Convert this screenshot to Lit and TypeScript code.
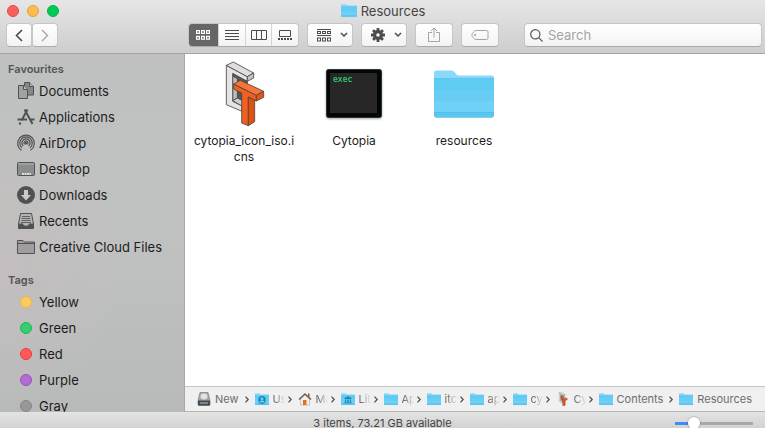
import { LitElement, html, svg, css, nothing, TemplateResult } from "lit";
import { customElement, state } from "lit/decorators.js";
import { classMap } from "lit/directives/class-map.js";

const back = html`<svg width="8" height="13" viewBox="0 0 8 13"><path d="M7 1 1.500 6.500 7 12" fill="none" stroke="currentColor" stroke-width="1.600"/></svg>`;
const forward = html`<svg width="8" height="13" viewBox="0 0 8 13"><path d="M1 1l5.500 5.500L1 12" fill="none" stroke="currentColor" stroke-width="1.400"/></svg>`;
const caret = html`<svg width="8" height="6" viewBox="0 0 8 6"><path d="M1 1l3 3 3-3" fill="none" stroke="currentColor" stroke-width="1.500"/></svg>`;

const cells = (y: number) =>
  [0.6, 5.6, 10.6].map((x) => svg`<rect x=${x} y=${y} width="2.800" height="2.800"/>`);

const viewIcons: Record<string, TemplateResult> = {
  Icons: html`<svg width="14" height="10" viewBox="0 0 14 10" fill="none" stroke="currentColor" stroke-width="1.200">${cells(0.6)}${cells(6.4)}</svg>`,
  List: html`<svg width="14" height="11" viewBox="0 0 14 11" stroke="currentColor"><path d="M0 .5h14M0 3.500h14M0 6.500h14M0 9.500h14"/></svg>`,
  Columns: html`<svg width="16" height="11" viewBox="0 0 16 11" fill="none" stroke="currentColor"><path d="M.5.5h15v9H.5zM5.500.5v9M10.500.5v9"/></svg>`,
  Gallery: html`<svg width="14" height="11" viewBox="0 0 14 11" fill="none" stroke="currentColor"><path d="M1.500.5h11v6h-11z"/><path d="M0 9h14" stroke-width="2" stroke-dasharray="2 1"/></svg>`,
};
const arrange = html`<svg width="14" height="13" viewBox="0 0 14 13" fill="none" stroke="currentColor"><path d="M0 .5h14M0 6.500h14"/>${[0.5, 5.5, 10.5].map(
  (x) => svg`<rect x=${x} y="2.500" width="3" height="2"/><rect x=${x} y="9" width="3" height="3"/>`,
)}</svg>`;
const gear = html`<svg width="14" height="14" viewBox="-7 -7 14 14"><g fill="currentColor">${[0, 45, 90, 135].map(
  (a) => svg`<rect x="-1.400" y="-7" width="2.800" height="14" rx=".5" transform="rotate(${a})"/>`,
)}<circle r="5"/></g><circle r="1.800" fill="#f5f5f5"/></svg>`;
const share = html`<svg width="12" height="16" viewBox="0 0 12 16" fill="none" stroke="currentColor"><path d="M4 5.500H.5v9h11v-9H8M6 10.500V1M3 4l3-3 3 3"/></svg>`;
const tag = html`<svg width="18" height="10" viewBox="0 0 18 10" fill="none" stroke="currentColor"><path d="M5 .5h10.500a1.500 1.500 0 0 1 1.500 1.500v6a1.500 1.500 0 0 1-1.500 1.500H5C3.500 9.500.8 6.500.8 5S3.500.5 5 .5z"/><circle cx="4" cy="5" r=".8"/></svg>`;
const lens = html`<svg width="13" height="13" viewBox="0 0 13 13" fill="none" stroke="#555" stroke-width="1.200"><circle cx="5.300" cy="5.300" r="4.600"/><path d="M8.700 8.700l3.800 3.800"/></svg>`;
const chevron = html`<svg class="sep" width="4" height="7" viewBox="0 0 4 7"><path d="M.5.7 3.200 3.500.5 6.300" fill="none" stroke="#4c4c4c" stroke-width="1.200"/></svg>`;

const side: Record<string, TemplateResult> = {
  Documents: html`<svg width="18" height="18" viewBox="0 0 18 18" fill="#a0a2a2" stroke="#505252"><path d="M7.500 13V.5h5l4 4V13z" fill="#858787"/><path d="M12.500.5v4h4" fill="#b5b7b7"/><path d="M1.500 16.500v-13h5l4 4v9z"/><path d="M6.500 3.500v4h4" fill="#c0c2c2"/></svg>`,
  Applications: html`<svg width="18" height="18" viewBox="0 0 18 18" fill="none" stroke="#505252" stroke-width="2"><path d="M7.500 1.500l1.500 2.500 6.500 12M10.500 1.500L4.500 12.500M3.500 14.500l-1 2M.5 11.500h9.500M13.500 11.500h4"/></svg>`,
  AirDrop: html`<svg width="18" height="18" viewBox="0 0 18 18" fill="none" stroke="#505252" stroke-width="1.200"><path d="M4.500 16.300a8.300 8.300 0 1 1 9 0M5 13.800a6.200 6.200 0 1 1 8 0M6.200 12a4.100 4.100 0 1 1 5.600 0M7.600 10.400a2 2 0 1 1 2.800 0"/><circle cx="9" cy="9.200" r=".7" fill="#505252"/></svg>`,
  Desktop: html`<svg width="18" height="18" viewBox="0 0 18 18"><rect x=".5" y="2.500" width="17" height="13" rx="1" fill="#8b8d8d" stroke="#505252"/><path d="M1 4h16" stroke="#b0b2b2"/><path d="M5 15h2v-2H5zm2.500 0h2v-2h-2zm2.500 0h2v-2h-2zm2.500 0H14v-2h-1.500z" fill="#dedede"/></svg>`,
  Downloads: html`<svg width="18" height="18" viewBox="0 0 18 18"><circle cx="9" cy="9" r="9" fill="#505252"/><path d="M7 4h4v5h3l-5 5.500L4 9h3z" fill="#c8caca"/></svg>`,
  Recents: html`<svg width="18" height="18" viewBox="0 0 18 18"><path d="M3.500 1.500h11L16.500 12v4.500h-15V12z" fill="#b3b5b5" stroke="#505252"/><path d="M5 4.500h8M4.500 6.500h9M4.500 8.500h9M4 10.500h10" stroke="#606262"/><path d="M1.500 11.500H6c0 3 6 3 6 0h4.500v4a1 1 0 0 1-1 1h-13a1 1 0 0 1-1-1z" fill="#505252"/></svg>`,
  "Creative Cloud Files": html`<svg width="18" height="18" viewBox="0 0 18 18" fill="#a09e9e" stroke="#505252"><path d="M.5 15.500v-13H6l1.500 1.500h10v11.500z"/><path d="M.5 5.500h17"/></svg>`,
};

const folder = (w: number, h: number, mark: unknown = nothing) => html`<svg width=${w} height=${h} viewBox="0 0 60 48" preserveAspectRatio="none">
  <path d="M0 3Q0 .5 2.500.5h15q2 0 3 1.500l1.500 2q1 1.500 3 1.500h32.500Q60 5.500 60 8v37q0 2.500-2.500 2.500h-55Q0 47.500 0 45z" fill="#8ad9f9"/>
  <path d="M0 9h60v36q0 2.500-2.500 2.500h-55Q0 47.500 0 45z" fill="#5fcaf2"/>
  <path d="M0 20h60v22H0z" fill="#72d3f8" opacity=".4"/>
  <path d="M0 31h60v11H0z" fill="#78d6fa" opacity=".5"/>
  <path d="M0 42.500h60M0 44.500h60M1 47h58" stroke="#48b0dc" stroke-width=".5"/>
  <path d="M0 8.500h60" stroke="#52b9e4" stroke-width=".7"/>${mark}</svg>`;
const personMark = svg`<circle cx="30" cy="28" r="16" fill="#1a88b8"/><circle cx="30" cy="23" r="6" fill="#72d0f5"/><path d="M19 38q0-8 11-8t11 8z" fill="#72d0f5"/>`;
const libraryMark = svg`<path d="M30 13l15 7v4H15v-4zM17 26h5v10h-5zm10 0h6v10h-6zm11 0h5v10h-5zM14 37h32v4H14z" fill="#1a88b8"/>`;

const cytopia = (size: number) => html`<svg width=${size} height=${size} viewBox="-27 12 192 192" stroke="#4a4340" stroke-width="2.500" stroke-linejoin="round">
  <path d="M35 44l44 24v60l-27 27-17-20z" fill="#565656"/>
  <path d="M35 54l14 8v58l-14 8z" fill="#bdbdbd"/>
  <path d="M35 128l14-8 16 8v18z" fill="#cfcfcf"/>
  <path d="M16 22l63 34v14L35 46v84l28 14v16L16 140z" fill="#e4e4e4"/>
  <path d="M16 22l21-10 61 33-19 11z" fill="#dedede"/>
  <path d="M79 56l19-11v15l-19 10z" fill="#c4c4c4"/>
  <path d="M38 78v15l24 12v90l20 8v-86l24 12v-17z" fill="#f2601f"/>
  <path d="M38 78l20-11 70 33-22 12z" fill="#f4743a"/>
  <path d="M82 117l19 10v64l-19 12z" fill="#e0500f"/>
  <path d="M106 112l22-12v18l-22 11z" fill="#ea5412"/></svg>`;
const exec = html`<svg class="exec" width="56" height="50" viewBox="0 0 56 50"><rect x=".5" y=".5" width="55" height="48" rx="2" fill="#050505" stroke="#25393c"/><rect x="4" y="4" width="47" height="40" fill="#272727"/><text x="7" y="13">exec</text></svg>`;
const drive = html`<svg width="14" height="14" viewBox="0 0 14 14"><path d="M3 .5h8l2 8v4a1 1 0 0 1-1 1H2a1 1 0 0 1-1-1v-4z" fill="#a0a5a8" stroke="#85888a" stroke-width=".8"/><ellipse cx="7" cy="4.500" rx="3.500" ry="3" fill="#dfe3e5"/><path d="M1 8.500h12v4a1 1 0 0 1-1 1H2a1 1 0 0 1-1-1z" fill="#454b4e"/><path d="M3 11h8" stroke="#b8c0c3"/></svg>`;
const home = html`<svg width="14" height="14" viewBox="0 0 14 14"><path d="M10 1.500h1.500V5H10z" fill="#a0522d"/><path d="M2.500 7L7 3l4.500 4v6h-9z" fill="#f4f0e8" stroke="#aaa" stroke-width=".6"/><path d="M1 7.500L7 2l6 5.500" fill="none" stroke="#6b6460" stroke-width="1.600"/><path d="M5 8h3.500v5H5z" fill="#e0721c"/></svg>`;

const pathItems: { name: string; icon: TemplateResult; full?: boolean }[] = [
  { name: "New", icon: drive, full: true },
  { name: "Users", icon: folder(14, 12, personMark) },
  { name: "Main", icon: home },
  { name: "Library", icon: folder(14, 12, libraryMark) },
  { name: "Apps", icon: folder(14, 12) },
  { name: "itch", icon: folder(14, 12) },
  { name: "apps", icon: folder(14, 12) },
  { name: "cyto", icon: folder(14, 12) },
  { name: "Cyto", icon: cytopia(14) },
  { name: "Contents", icon: folder(14, 12), full: true },
  { name: "Resources", icon: folder(14, 12), full: true },
];

@customElement("app-root")
export class AppRoot extends LitElement {
  @state() private view = "Icons";

  static styles = css`
    * { box-sizing: border-box; }
    :host {
      display: grid;
      grid-template-rows: auto minmax(0, 1fr) auto;
      height: 100vh;
      overflow: hidden;
      background: #fff;
      font: 13px/16px Inter, "Liberation Sans", sans-serif;
      color: #1c1c1c;
    }
    svg { display: block; flex: none; overflow: visible; }
    button { font: inherit; padding: 0; margin: 0; border: 0; background: none; color: #4c4c4c; }
    header {
      display: grid;
      grid-template-rows: 21px 24px;
      row-gap: 2px;
      padding-bottom: 6px;
      background: linear-gradient(#e6e6e6, #cdcdcd);
      border-bottom: 1px solid #a3a3a3;
    }
    .titlebar { display: grid; grid-template-columns: 1fr auto 1fr; align-items: center; padding-left: 7px; }
    .lights { display: flex; gap: 8px; }
    .light { width: 12px; height: 12px; border-radius: 50%; border: 1px solid #e24b47; background: #fc605c; }
    .light.min { background: #fdbc50; border-color: #dfa03c; }
    .light.zoom { background: #00ca56; border-color: #0fae4b; }
    h1 { display: flex; align-items: center; gap: 4px; margin: 0; padding-right: 6px; font-size: 13px; font-weight: 400; color: #444; }
    .toolbar { display: flex; align-items: stretch; gap: 8px; padding: 0 3px 0 6px; }
    .box {
      display: flex; align-items: center; justify-content: center;
      background: linear-gradient(#fff, #f3f3f3);
      border: 1px solid #c6c6c6; border-bottom-color: #ababab; border-radius: 4px;
    }
    .nav { display: flex; flex: 1 1 0; max-width: 174px; }
    .nav .box { width: 26px; }
    .box:disabled { color: #a5a5a5; }
    .views { display: flex; overflow: hidden; width: 111px; }
    .view { display: flex; flex: 1; align-self: stretch; align-items: center; justify-content: center; border-left: 1px solid #d4d4d4; }
    .view:first-child { border-left: 0; flex: none; width: 30px; margin: -1px 0 -1px -1px; }
    .view.on { background: #666; color: #fff; }
    .menu { width: 46px; justify-content: space-between; padding: 0 4px 0 9px; }
    .action { width: 38px; }
    .search { flex: 1; justify-content: flex-start; gap: 5px; margin-left: 17px; padding: 0 5px; min-width: 60px; }
    .search input { flex: 1; min-width: 0; padding: 0; border: 0; outline: 0; background: none; font: inherit; color: #333; }
    .search input::placeholder { color: #a4a4a4; opacity: 1; }
    .body { display: grid; grid-template-columns: 185px minmax(0, 1fr); min-height: 0; }
    nav.sidebar {
      overflow: hidden; padding-top: 6px; border-right: 1px solid #a8a8a8;
      background: radial-gradient(ellipse 120px 150px at 0 58%, #c3bdbe, transparent), linear-gradient(#bfc1c0, #c0c2c1 50%, #b8baba);
    }
    h2 { margin: 0; padding-left: 8px; font-size: 11px; line-height: 18px; font-weight: 600; color: #525454; }
    ul, ol { list-style: none; margin: 0; padding: 0; }
    .places { margin-bottom: 11px; }
    .place { display: flex; align-items: center; gap: 4px; height: 26px; padding-left: 17px; color: inherit; text-decoration: none; white-space: nowrap; }
    .dot { width: 12px; height: 12px; margin: 0 3px; border-radius: 50%; border: 1px solid; }
    .yellow { background: #fbcb60; border-color: #eeb842; }
    .green { background: #35cd6f; border-color: #18b953; }
    .red { background: #fc5a5a; border-color: #f03a3c; }
    .purple { background: #b36cd3; border-color: #9c50c0; }
    .gray { background: #98989b; border-color: #858588; }
    .main { display: grid; grid-template-rows: minmax(0, 1fr) auto; min-width: 0; }
    .files { display: flex; flex-wrap: wrap; align-items: flex-start; align-content: flex-start; padding: 8px 4px; overflow: hidden; }
    .file { display: grid; grid-template-rows: 64px auto; row-gap: 7px; justify-items: center; align-items: center; width: 110px; font-size: 12px; text-align: center; }
    .name { width: 102px; overflow-wrap: anywhere; }
    .exec { filter: drop-shadow(0 1px 1px #0005); }
    .exec text { font: 8px "DejaVu Sans Mono", monospace; fill: #2fd66b; stroke: #2fd66b; stroke-width: .2px; }
    .path { display: flex; align-items: center; height: 26px; padding-left: 12px; background: #f0f0f0; border-top: 1px solid #c6c6c6; border-bottom: 1px solid #b5b5b5; font-size: 11px; overflow: hidden; }
    .crumb { display: flex; align-items: center; flex: none; }
    .crumb a { display: flex; align-items: center; gap: 4px; color: #6e6e6e; text-decoration: none; }
    .sep { margin: 0 6px; }
    .short .label { width: 12px; overflow: hidden; white-space: nowrap; -webkit-mask-image: linear-gradient(90deg, #000 20%, transparent); mask-image: linear-gradient(90deg, #000 20%, transparent); }
    .short .sep { margin-left: 3px; }
    footer { display: grid; grid-template-columns: 1fr auto 1fr; align-items: start; height: 16px; padding: 0 12px; background: linear-gradient(#e3e3e3, #d2d2d2); font-size: 11px; line-height: 22px; color: #444; }
    .size { grid-column: 3; justify-self: end; appearance: none; width: 78px; height: 12px; margin: 5px 0 0; background: linear-gradient(90deg, #3b8df7 25%, #a8a8a8 25%) center / 100% 3px no-repeat; }
    .size::-webkit-slider-thumb { appearance: none; width: 12px; height: 12px; border-radius: 50%; background: #fff; box-shadow: 0 0 1px 1px #0002; }
    .count { grid-column: 2; grid-row: 1; }
  `;

  render() {
    return html`
      <header>
        <div class="titlebar">
          <div class="lights">
            <button class="light" aria-label="Close"></button>
            <button class="light min" aria-label="Minimise"></button>
            <button class="light zoom" aria-label="Zoom"></button>
          </div>
          <h1>${folder(16, 13)}Resources</h1>
        </div>
        <div class="toolbar">
          <div class="nav">
            <button class="box" aria-label="Back">${back}</button>
            <button class="box" aria-label="Forward" disabled>${forward}</button>
          </div>
          <div class="box views" role="group" aria-label="View">
            ${Object.keys(viewIcons).map(
              (v) => html`<button
                class=${classMap({ view: true, on: v === this.view })}
                aria-label=${v}
                aria-pressed=${v === this.view}
                @click=${() => (this.view = v)}
              >${viewIcons[v]}</button>`,
            )}
          </div>
          <button class="box menu" aria-label="Group items">${arrange}${caret}</button>
          <button class="box menu" aria-label="Actions">${gear}${caret}</button>
          <button class="box action" aria-label="Share" disabled>${share}</button>
          <button class="box action" aria-label="Edit tags" disabled>${tag}</button>
          <label class="box search">${lens}<input type="text" placeholder="Search" aria-label="Search" /></label>
        </div>
      </header>
      <div class="body">
        <nav class="sidebar">
          <h2>Favourites</h2>
          <ul class="places">
            ${Object.entries(side).map(([name, icon]) => html`<li><a class="place" href="#">${icon}${name}</a></li>`)}
          </ul>
          <h2>Tags</h2>
          <ul>
            ${["Yellow", "Green", "Red", "Purple", "Gray"].map(
              (t) => html`<li><a class="place" href="#"><span class="dot ${t.toLowerCase()}"></span>${t}</a></li>`,
            )}
          </ul>
        </nav>
        <div class="main">
          <main class="files">
            <div class="file">${cytopia(64)}<span class="name">cytopia_icon_iso.icns</span></div>
            <div class="file">${exec}<span class="name">Cytopia</span></div>
            <div class="file">${folder(60, 48)}<span class="name">resources</span></div>
          </main>
          <ol class="path">
            ${pathItems.map(
              (p, i) => html`<li class=${classMap({ crumb: true, short: !p.full })}>
                <a href="#">${p.icon}<span class="label">${p.name}</span></a>${i < pathItems.length - 1 ? chevron : nothing}
              </li>`,
            )}
          </ol>
        </div>
      </div>
      <footer>
        <span class="count">3 items, 73.21 GB available</span>
        <input class="size" type="range" min="0" max="100" value="20" aria-label="Icon size" />
      </footer>
    `;
  }
}
